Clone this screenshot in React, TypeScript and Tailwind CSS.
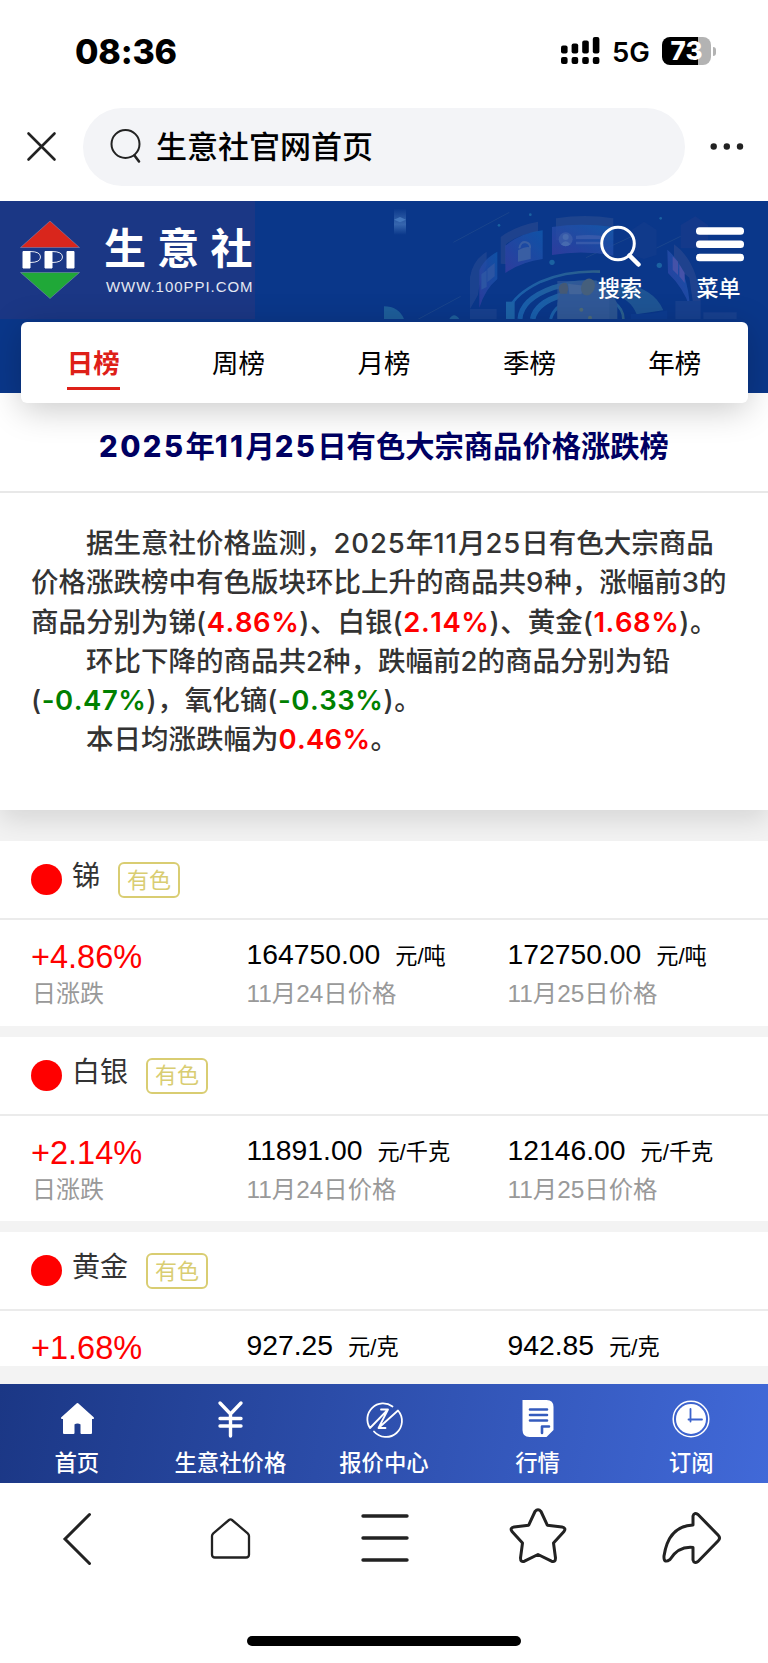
import { useState } from 'react';
import type { ReactNode } from 'react';

interface Commodity {
  name: string;
  change: string;
  prev: string;
  current: string;
  unit: string;
}

const tabs = ['日榜', '周榜', '月榜', '季榜', '年榜'];

const commodities: Commodity[] = [
  { name: '锑', change: '+4.86%', prev: '164750.00', current: '172750.00', unit: '元/吨' },
  { name: '白银', change: '+2.14%', prev: '11891.00', current: '12146.00', unit: '元/千克' },
  { name: '黄金', change: '+1.68%', prev: '927.25', current: '942.85', unit: '元/克' },
];

function StatusBar() {
  return (
    <div className="flex h-[108px] items-start justify-between pl-[75px] pr-[52px] font-['Inter',sans-serif] text-black">
      <span className="mt-[32px] text-[34px] leading-[40px] font-extrabold tracking-[-0.2px]">08:36</span>
      <div className="mt-[31px] flex h-[40px] items-center">
        <svg width="39" height="28" viewBox="0 0 39 28">
          <rect x="0" y="8.5" width="6.6" height="8" rx="2" />
          <rect x="10.6" y="6.5" width="6.6" height="10" rx="2" />
          <rect x="21.2" y="3.5" width="6.6" height="13" rx="2" />
          <rect x="31.8" y="0" width="6.6" height="16.5" rx="2" />
          <rect x="0" y="20" width="6.6" height="7" rx="2" />
          <rect x="10.6" y="20" width="6.6" height="7" rx="2" />
          <rect x="21.2" y="20" width="6.6" height="7" rx="2" />
          <rect x="31.8" y="20" width="6.6" height="7" rx="2" />
        </svg>
        <span className="mt-[2px] ml-[12px] w-[38px] text-[27.5px] leading-[40px] font-semibold">5G</span>
        <div className="ml-[12px] flex h-[28px] w-[49px] items-center justify-center rounded-[8px] bg-[linear-gradient(90deg,#000_74%,#b3b3b3_74%)] text-[26px] leading-[28px] font-extrabold text-white">
          73
        </div>
        <div className="ml-[2px] h-[9px] w-[3px] rounded-r-full bg-[#b3b3b3]" />
      </div>
    </div>
  );
}

function AddressBar() {
  return (
    <div className="flex h-[93px] items-start">
      <svg className="mt-[23px] ml-[26px]" width="31" height="31" viewBox="0 0 31 31" fill="none" stroke="#222" strokeWidth="2.6" strokeLinecap="round">
        <path d="M2.5 2.5 28.5 28.5M28.5 2.5 2.5 28.5" />
      </svg>
      <div className="ml-[26px] flex h-[78px] w-[602px] items-center rounded-full bg-[#f3f4f7] pl-[27px]">
        <svg width="34" height="36" viewBox="0 0 34 36" fill="none" stroke="#222" strokeWidth="2" strokeLinecap="round">
          <circle cx="15.5" cy="15" r="14" />
          <path d="M24.5 26.5 29 32.5" strokeWidth="2.6" />
        </svg>
        <span className="mt-[2px] ml-[12px] text-[31px] leading-[40px] font-medium whitespace-nowrap text-black">生意社官网首页</span>
      </div>
      <svg className="mt-[33px] ml-[24px]" width="40" height="10" viewBox="0 0 40 10" fill="#222">
        <circle cx="4.7" cy="5.5" r="3.2" />
        <circle cx="17.8" cy="5.5" r="3.2" />
        <circle cx="31" cy="5.5" r="3.2" />
      </svg>
    </div>
  );
}

// Faint decorative scene behind the header buttons
function HeaderArt() {
  return (
    <svg className="absolute top-0 right-0 opacity-85" width="384" height="118" viewBox="0 18 1152 354" fill="none">
      <defs>
        <linearGradient id="panel" x1="0" x2="1" y1="1" y2="0">
          <stop offset="0" stopColor="#3f3fa6" />
          <stop offset="1" stopColor="#1260b4" />
        </linearGradient>
        <linearGradient id="ring" x1="0" x2="1">
          <stop offset="0" stopColor="#1b66b4" />
          <stop offset="1" stopColor="#34678a" />
        </linearGradient>
        <linearGradient id="beam" x1="0" x2="0" y1="0" y2="1">
          <stop offset="0" stopColor="#5484c4" stopOpacity="0" />
          <stop offset="0.6" stopColor="#4b7cc0" stopOpacity="0.8" />
          <stop offset="1" stopColor="#4b7cc0" stopOpacity="0" />
        </linearGradient>
      </defs>
      <path d="M30 40h36v80H30z" fill="url(#beam)" />
      <path d="m30 74 18-8 18 8-18 8z" fill="#4f83c6" />
      <g stroke="#27508f" strokeWidth="2">
        <path d="M208 142 376 52" />
        <path d="m100 374 130-70" />
        <path d="m606 188 190-88" />
        <path d="m800 168 110-54" />
      </g>
      <path d="M0 334q44 0 60 38H0z" fill="#22659f" />
      <path d="M196 372q14-22 30 0z" fill="#22659f" />
      <path d="M258 342v-96q8-50 50-76v40q-22 50-26 90z" fill="#1f4491" />
      <path d="M286 338V226q14-34 54-56v82q-36 30-54 86z" fill="url(#panel)" opacity="0.75" />
      <path d="m292 238 16-12v50l-16 8zM310 222l22-18v40l-22 18z" fill="#335ba8" />
      <path d="M350 126q46-34 112-46v30q-60 8-96 38v60l-16-2z" fill="#22458e" />
      <path d="M364 152q46-38 112-46v86q-62 8-112 42z" fill="url(#panel)" opacity="0.8" />
      <path d="M402 166q40-20 38 0v26l-38 8z" fill="#4265a8" />
      <path d="M406 160q4-22 20-18 14 4 12 18" stroke="#4265a8" strokeWidth="6" />
      <path d="M516 70q86-14 172 0v66H516z" fill="#22478f" />
      <path d="M504 96q86-14 184 0v86q-92-18-184-2z" fill="url(#panel)" opacity="0.8" />
      <circle cx="545" cy="133" r="21" fill="#3f60ae" />
      <circle cx="545" cy="126" r="9" fill="#5273b6" />
      <path d="M531 148q14-18 28 0-14 12-28 0z" fill="#5273b6" />
      <path d="M576 122q36-4 76 0v10h-76zM576 140h76v8h-76z" fill="#3e60b0" />
      <path d="m744 104 36-24 38 24v76l-38 12-36-12z" fill="#123b8c" />
      <path d="m890 90 44-26 38 26v70h-82z" fill="#163a8b" />
      <path d="M870 148q70 50 80 170h-24l-10-70-46-38z" fill="#23458f" />
      <path d="M850 164q60 50 68 174-20-60-66-104z" fill="url(#panel)" opacity="0.85" />
      <path d="m866 184 16 16v40l-16-16zM886 208l16 26v30l-16-20z" fill="#5057ae" />
      <path d="M258 342h80v30h-80zM874 318h76v54h-76zM958 352h100v20H958z" fill="#1a4290" />
      <g stroke="url(#ring)">
        <path d="M374 372q-10-60 96-112 80-34 178-30" strokeWidth="8" />
        <path d="M408 372q4-60 100-94 60-18 130-14" strokeWidth="15" />
        <path d="M446 372q10-50 90-72 90-10 150 40" strokeWidth="17" />
        <path d="M500 372q10-40 60-54" strokeWidth="9" />
        <path d="M690 322q28 20 28 50" strokeWidth="8" />
      </g>
      <path d="M366 320h26v52h-26z" fill="#216bae" />
      <path d="M710 264q100 14 128 82l-80 12q-20-50-78-60z" fill="#225a96" />
      <path d="M740 356q60 4 110-10v26H740z" fill="#0d3c92" />
      <path d="M520 326q10-60 80-70 74 10 100 70v46H520z" fill="#315a94" />
      <path d="M520 258h156v114H520z" fill="#3b619c" opacity="0.65" />
      <path d="M524 282q8-26 26-16v30h-22z" fill="#4f6173" />
      <circle cx="539" cy="281" r="14" fill="#505f72" />
      <path d="m552 266 50 6-10 26h-36z" fill="#4c6c9c" />
      <ellipse cx="612" cy="276" rx="20" ry="26" transform="rotate(22 612 276)" fill="#50667a" />
      <circle cx="592" cy="344" r="6" fill="#5a7476" />
      <circle cx="618" cy="368" r="6" fill="#5a7476" />
      <g fill="#1f6aa6">
        <circle cx="504" cy="202" r="8" />
        <circle cx="826" cy="211" r="8" />
        <circle cx="345" cy="91" r="4" />
        <circle cx="439" cy="59" r="4" />
        <circle cx="830" cy="70" r="4" />
      </g>
    </svg>
  );
}

function SiteHeader() {
  return (
    <header className="relative h-[121px] bg-[#0a378a] text-white">
      <HeaderArt />
      <div className="relative flex h-full justify-between">
        <div className="flex h-[118px] w-[255px] bg-[#1b3785]">
          <div className="ml-[20px] flex w-[60px] flex-col items-center pt-[20px]">
            <svg width="60" height="27" viewBox="0 0 60 27">
              <path d="M30 0 59.5 26.5H.5z" fill="#d9261c" stroke="#8a95bd" strokeWidth="0.5" />
            </svg>
            <div className="flex h-[24px] w-[60px] items-center justify-center">
              <svg width="56" height="20" viewBox="0 0 56 20" fill="#fff" stroke="#fff">
                <path d="M1 1.5h7V18H1zM23 1.5h7V18h-7zM45 1.5h7V18h-7z" strokeWidth="1" />
                <path d="M8 1.5Q18.500 1.500 18.500 7T8 12.500M30 1.500Q40.500 1.500 40.500 7T30 12.500" fill="none" strokeWidth="0.900" />
              </svg>
            </div>
            <svg width="60" height="27" viewBox="0 0 60 27">
              <path d="M30 26.500 59.500.5H.5z" fill="#20a838" stroke="#8a95bd" strokeWidth="0.5" />
            </svg>
          </div>
          <div className="ml-[24px] pt-[25px] whitespace-nowrap">
            <div className="text-[42px] leading-[48px] font-bold tracking-[11.200px]">生意社</div>
            <div className="mt-[4px] ml-[2px] text-[15px] leading-[18px] tracking-[0.950px] text-[#e4e8f2]">WWW.100PPI.COM</div>
          </div>
        </div>
        <div className="flex pr-[18px] text-[22px] leading-[28px] font-medium">
          <button className="flex w-[52px] flex-col items-center pt-[24px]">
            <svg width="44" height="44" viewBox="0 0 44 44" fill="none" stroke="#fff" strokeLinecap="round">
              <circle cx="20" cy="18.500" r="16.300" strokeWidth="3" />
              <path d="m31.500 30.500 9 9" strokeWidth="4.500" />
            </svg>
            <span className="mt-[6px] whitespace-nowrap">搜索</span>
          </button>
          <button className="ml-[44px] flex w-[60px] flex-col items-center pt-[24px]">
            <svg width="50" height="44" viewBox="0 0 50 44" fill="#fff">
              <rect x="1" y="2.300" width="48" height="7.400" rx="3.500" />
              <rect x="1" y="15.500" width="48" height="7.400" rx="3.500" />
              <rect x="1" y="28.800" width="48" height="7.400" rx="3.500" />
            </svg>
            <span className="mt-[6px] mr-[3px] whitespace-nowrap">菜单</span>
          </button>
        </div>
      </div>
    </header>
  );
}

function RankTabs() {
  const [active, setActive] = useState(0);

  return (
    <div className="h-[71px] bg-[#0a378a] px-[20.500px]">
      <nav className="relative grid h-[81px] grid-cols-5 rounded-[6px] bg-white shadow-[0_6px_34px_rgba(0,0,0,0.22)]">
        {tabs.map((tab, i) => (
          <button key={tab} onClick={() => setActive(i)} className="flex justify-center pt-[23px]">
            <span
              className={
                i === active
                  ? 'h-[45px] border-b-[3px] border-[#de2018] text-[26.500px] leading-[38px] font-bold text-[#de2018]'
                  : 'h-[45px] text-[26.500px] leading-[38px] text-black'
              }
            >
              {tab}
            </span>
          </button>
        ))}
      </nav>
    </div>
  );
}

// Latin digits are set a little looser than the Chinese around them
function Num({ children }: { children: ReactNode }) {
  return <span className="tracking-[0.900px]">{children}</span>;
}

function Pct({ value }: { value: string }) {
  return (
    <span className="tracking-[0.550px]">
      (
      <span className={value.startsWith('-') ? 'font-semibold text-[#008000]' : 'font-semibold text-[#ff0000]'}>{value}</span>
      )
    </span>
  );
}

function Summary() {
  return (
    <section className="h-[417px] bg-white font-['Inter','Noto_Sans_CJK_SC',sans-serif] shadow-[0_10px_26px_rgba(0,0,0,0.12)] [font-kerning:none]">
      <div className="h-[100px] border-b-2 border-[#e8e8e8] pt-[34px]">
        <h1 className="text-center text-[29.300px] leading-[40px] font-bold whitespace-nowrap text-[#000062]">
          <span className="font-extrabold tracking-[2.400px]">2025</span>年
          <span className="font-extrabold tracking-[2.400px]">11</span>月
          <span className="font-extrabold tracking-[2.400px]">25</span>日有色大宗商品价格涨跌榜
        </h1>
      </div>
      <div className="pt-[31px] pl-[31px] text-[27.500px] leading-[39.300px] font-medium whitespace-nowrap text-[#333]">
        <p className="indent-[2em]">
          据生意社价格监测，<Num>2025</Num>年<Num>11</Num>月<Num>25</Num>日有色大宗商品
        </p>
        <p>
          价格涨跌榜中有色版块环比上升的商品共<Num>9</Num>种，涨幅前3的
        </p>
        <p>
          商品分别为锑
          <Pct value="4.86%" />
          、白银
          <Pct value="2.14%" />
          、黄金
          <Pct value="1.68%" />。
        </p>
        <p className="indent-[2em]">环比下降的商品共2种，跌幅前2的商品分别为铅</p>
        <p>
          <Pct value="-0.47%" />
          ，氧化镝
          <Pct value="-0.33%" />。
        </p>
        <p className="indent-[2em]">
          本日均涨跌幅为<span className="font-semibold tracking-[0.300px] text-[#ff0000]">0.46%</span>。
        </p>
      </div>
    </section>
  );
}

function PriceCell({ price, unit, label }: { price: string; unit: string; label?: string }) {
  return (
    <div className="whitespace-nowrap">
      <div className="text-[28.300px] leading-[36px] text-black">
        {price}
        <span className="ml-[15px] text-[22.200px]">{unit}</span>
      </div>
      {label && <div className="mt-[1px] text-[24.400px] leading-[36px] text-[#999]">{label}</div>}
    </div>
  );
}

function CommodityCard({ item, compact }: { item: Commodity; compact: boolean }) {
  return (
    <article className={compact ? 'h-[134px] shrink-0 bg-white' : 'h-[184.500px] shrink-0 bg-white'}>
      <div className="flex h-[79px] items-start border-b-2 border-[#ebebeb] pl-[31px]">
        <span className="mt-[23px] h-[31px] w-[31px] rounded-full bg-[#ff0000]" />
        <span className="mt-[16px] ml-[10px] text-[28px] leading-[40px] text-[#333]">{item.name}</span>
        <span className="mt-[21px] ml-[18px] flex h-[36px] w-[62px] items-center justify-center rounded-[6px] border-2 border-[#d9cd72] text-[22px] text-[#d9cd72]">
          有色
        </span>
      </div>
      <div className="grid grid-cols-[215.500px_261px_1fr] pt-[16px] pl-[31px]">
        <div>
          <div className="mt-[2px] text-[32.500px] leading-[38px] text-[#ff0000]">{item.change}</div>
          {!compact && <div className="ml-[1px] text-[24px] leading-[36px] text-[#999]">日涨跌</div>}
        </div>
        <PriceCell price={item.prev} unit={item.unit} label={compact ? undefined : '11月24日价格'} />
        <PriceCell price={item.current} unit={item.unit} label={compact ? undefined : '11月25日价格'} />
      </div>
    </article>
  );
}

function NavItem({ label, children }: { label: string; children: ReactNode }) {
  return (
    <a className="flex flex-col items-center pt-[14px] whitespace-nowrap">
      <svg width="42" height="42" viewBox="-21 -21 42 42" fill="none" stroke="#fff" strokeLinecap="round" strokeLinejoin="round">
        {children}
      </svg>
      <span className="mt-[8px] text-[22.400px] leading-[32px] font-medium">{label}</span>
    </a>
  );
}

function SiteNav() {
  return (
    <nav className="grid h-[99px] shrink-0 grid-cols-5 bg-[linear-gradient(100deg,#1b3785,#4169d8)] text-white">
      <NavItem label="首页">
        <path d="M.5-15 16-1h-2v15H4.500V5q-4-3-8 0v9H-13V-1h-2z" fill="#fff" strokeWidth="2" />
      </NavItem>
      <NavItem label="生意社价格">
        <path d="M-10-16 .5-5 11-16M.5-5v22M-10-.5h21M-10 7h21" strokeWidth="3.400" />
      </NavItem>
      <NavItem label="报价中心">
        <path d="M8.500-12.500A15.800 15.800 0 0 0-14 9L4-9.500M4-9.500H-3M4-9.500-5.500 9M-10 12.500A15.800 15.800 0 0 0 14-8.500L-5.500 9M-5.500 9H1.500" strokeWidth="1.800" />
      </NavItem>
      <NavItem label="行情">
        <path d="M-15.500-19H8.500q7 0 7 7V11l-7 7H-8.500q-7 0-7-7z" fill="#fff" stroke="none" />
        <path d="M-8-9.500H9M-8-4H9M-8 1.500H9M11 7.500H4V14" stroke="#345bbd" strokeWidth="2.600" />
      </NavItem>
      <NavItem label="订阅">
        <circle r="17.800" strokeWidth="1.500" />
        <circle r="15" fill="#fff" stroke="none" />
        <path d="M-.5-10V2.500M-2.500.5H11" stroke="#3b62cc" strokeWidth="1.800" />
      </NavItem>
    </nav>
  );
}

function BrowserToolbar() {
  return (
    <footer className="flex h-[180px] shrink-0 flex-col items-center bg-white">
      <div className="grid h-[110px] w-full grid-cols-5 place-items-center [&_svg]:h-[70px] [&_svg]:w-[80px]">
        <svg viewBox="-40 -35 80 70" fill="none" stroke="#222" strokeWidth="3" strokeLinecap="round">
          <path d="M12.500-23.500-12 1l24.500 24.500" />
        </svg>
        <svg viewBox="-40 -35 80 70" fill="none" stroke="#222" strokeWidth="2.300" strokeLinejoin="round">
          <path d="M-18-2q0-1.500 1.300-2.700L-1-18Q.5-19.200 2-18L17.700-4.700Q19-3.500 19-2V16.500q0 3-3 3h-31q-3 0-3-3z" />
        </svg>
        <svg viewBox="-40 -35 80 70" fill="none" stroke="#222" strokeWidth="3.400" strokeLinecap="round">
          <path d="M-21-22H23M-21 0H23M-21 22H23" />
        </svg>
        <svg viewBox="-40 -35 80 70" fill="none" stroke="#222" strokeWidth="3" strokeLinejoin="round">
          <path d="M-3-26.500Q0-30 3-26.500L9.300-12.800 24-11Q28.500-10 26-6.500L15.500 5 17.500 20q0 4.500-4 3.200L0 16.500-13.500 23.200q-4 1.300-4-3.200L-15.500 5-26-6.500q-2.500-3.500 2-4.500L-9.300-12.800z" />
        </svg>
        <svg viewBox="-40 -35 80 70" fill="none" stroke="#222" strokeWidth="3" strokeLinejoin="round">
          <path d="M2-13V-22q1-4 5-1.500L27-3q3 3 0 6L7 23.500q-4 2.500-5-1.500V9.500Q-12.500 8-21 21.500-27.500 26-27 18-22.500-12 2-13z" />
        </svg>
      </div>
      <div className="mt-[43px] h-[10px] w-[274px] rounded-full bg-black" />
    </footer>
  );
}

export default function App() {
  return (
    <div className="flex h-[1663px] w-[768px] flex-col overflow-hidden bg-white font-['Liberation_Sans','Noto_Sans_CJK_SC',sans-serif]">
      <StatusBar />
      <AddressBar />
      <SiteHeader />
      <main className="flex min-h-0 flex-1 flex-col bg-[#f3f3f3]">
        {/* tabs hang over the summary below */}
        <div className="relative z-10">
          <RankTabs />
        </div>
        <Summary />
        <div className="mt-[31px] flex flex-col gap-[11px]">
          {commodities.map((item, i) => (
            <CommodityCard key={item.name} item={item} compact={i === commodities.length - 1} />
          ))}
        </div>
      </main>
      <SiteNav />
      <BrowserToolbar />
    </div>
  );
}
